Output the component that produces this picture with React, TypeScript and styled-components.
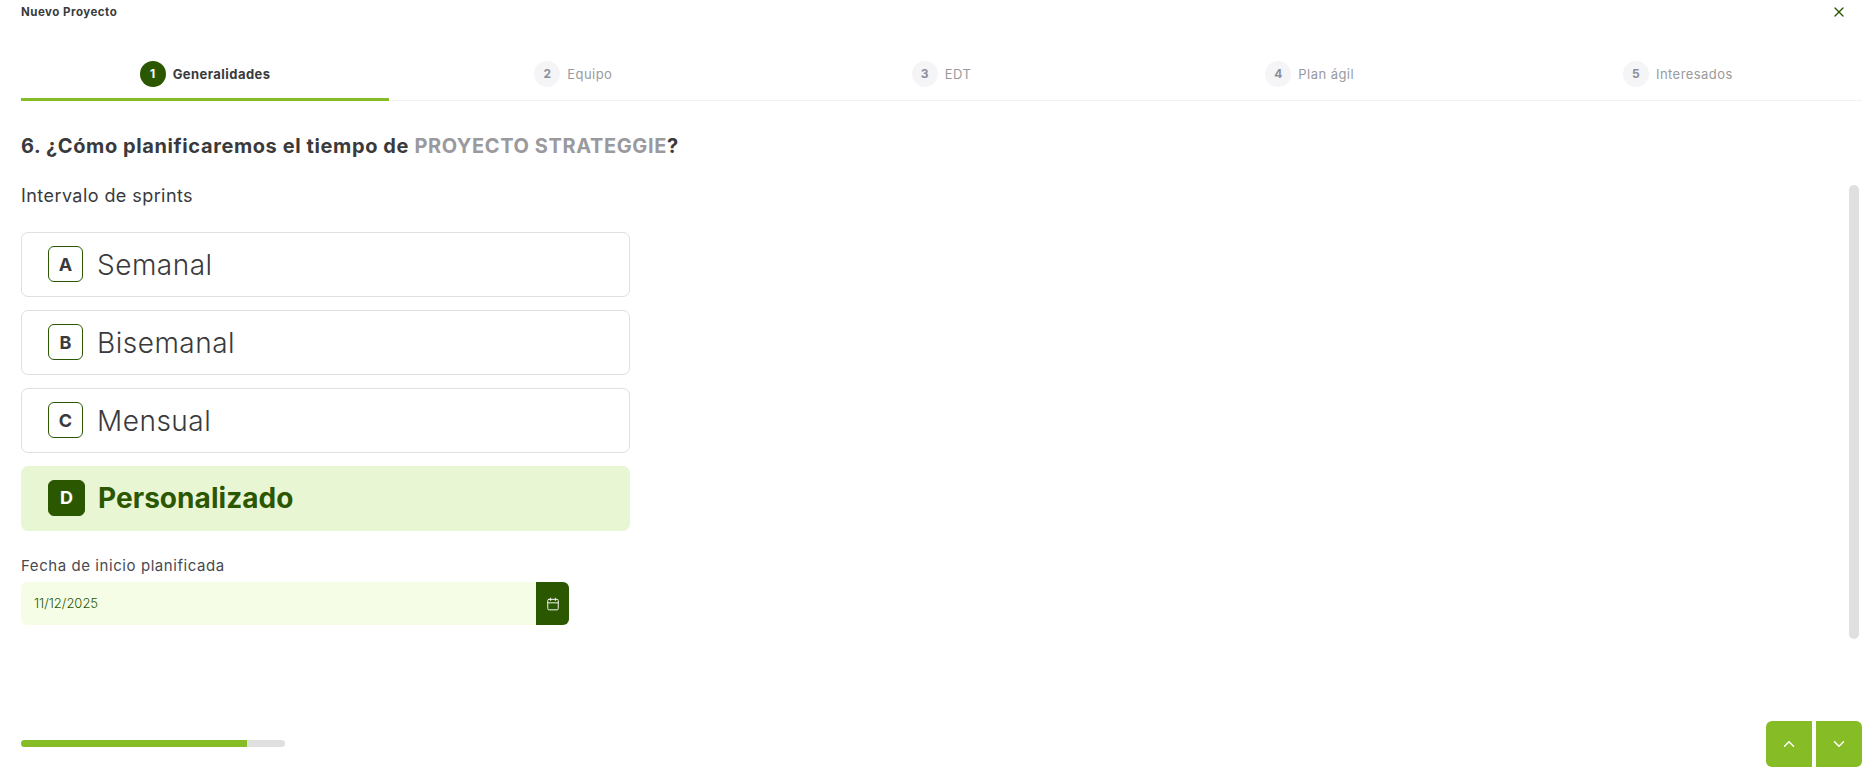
import * as React from 'react';
import styled, { createGlobalStyle } from 'styled-components';
import { X, ChevronUp, ChevronDown, Calendar } from 'lucide-react';

const GlobalStyle = createGlobalStyle`
    html, body {
        margin: 0;
        padding: 0;
        background: #fff;
    }
    * {
        box-sizing: border-box;
    }
    body {
        font-family: "Inter", "Noto Sans", sans-serif;
        color: #3a3a3c;
    }
`;

const Page = styled.div`
    width: 1873px;
    height: 773px;
    padding: 0 11px 6px 21px;
    display: flex;
    flex-direction: column;
    overflow: hidden;
`;

const Header = styled.div`
    height: 23px;
    display: flex;
    align-items: center;
    justify-content: space-between;
`;

const Title = styled.div`
    font-size: 11.5px;
    font-weight: 700;
    letter-spacing: 0.5px;
    color: #3a3a3c;
`;

const CloseButton = styled.button`
    width: 16px;
    height: 16px;
    margin-right: 15px;
    padding: 0;
    border: 0;
    background: none;
    color: #2b5700;
    display: flex;
    align-items: center;
    justify-content: center;
`;

const Tabs = styled.div`
    margin-top: 27px;
    display: grid;
    grid-template-columns: repeat(5, 1fr);
    border-bottom: 1px solid #f0f2f5;
`;

const Tab = styled.div<{ $active?: boolean }>`
    height: 51px;
    padding-top: 11px;
    margin-bottom: -1px;
    display: flex;
    justify-content: center;
    gap: 7px;
    border-bottom: 3px solid ${({ $active }) => ($active ? '#86bc25' : 'transparent')};
    font-size: 13px;
    letter-spacing: 0.45px;
    font-weight: ${({ $active }) => ($active ? 700 : 400)};
    color: ${({ $active }) => ($active ? '#3a3a3c' : '#9a9a9e')};
    line-height: 26px;
`;

const TabNumber = styled.span<{ $active?: boolean }>`
    width: 26px;
    height: 26px;
    border-radius: 50%;
    display: flex;
    align-items: center;
    justify-content: center;
    font-size: 12px;
    font-weight: 700;
    letter-spacing: 0;
    background: ${({ $active }) => ($active ? '#2b5700' : '#f5f5f7')};
    color: ${({ $active }) => ($active ? '#fff' : '#8a8f9c')};
`;

const Body = styled.div`
    flex: 1;
    display: flex;
    justify-content: space-between;
`;

const Content = styled.div`
    width: 630px;
`;

const Question = styled.h2`
    margin: 32px 0 0;
    font-size: 20px;
    line-height: 26px;
    font-weight: 700;
    letter-spacing: 0.6px;
    white-space: nowrap;
    color: #3a3a3c;
`;

const ProjectName = styled.span`
    color: #9a999e;
`;

const SectionLabel = styled.div`
    margin-top: 25px;
    font-size: 18px;
    line-height: 24px;
    font-weight: 400;
    letter-spacing: 0.43px;
`;

const Options = styled.div`
    margin-top: 24px;
    width: 609px;
    display: flex;
    flex-direction: column;
    gap: 13px;
`;

const Option = styled.div<{ $selected?: boolean }>`
    height: 65px;
    padding-left: 26px;
    padding-bottom: ${({ $selected }) => ($selected ? 2 : 0)}px;
    display: flex;
    align-items: center;
    gap: ${({ $selected }) => ($selected ? 13 : 14)}px;
    border-radius: 7px;
    border: 1px solid ${({ $selected }) => ($selected ? '#e8f6d4' : '#dfdfe1')};
    background: ${({ $selected }) => ($selected ? '#e8f6d4' : '#fff')};
    color: ${({ $selected }) => ($selected ? '#2b5700' : '#3a3a3c')};
    font-size: 28px;
    letter-spacing: ${({ $selected }) => ($selected ? 0.05 : 0.5)}px;
    font-weight: ${({ $selected }) => ($selected ? 700 : 300)};
`;

const OptionKey = styled.span<{ $selected?: boolean }>`
    width: ${({ $selected }) => ($selected ? 37 : 35)}px;
    height: 36px;
    margin-bottom: ${({ $selected }) => ($selected ? 0 : 1)}px;
    border-radius: 6px;
    border: 1px solid #2b5700;
    display: flex;
    align-items: center;
    justify-content: center;
    font-size: 18px;
    font-weight: 700;
    letter-spacing: 0;
    background: ${({ $selected }) => ($selected ? '#2b5700' : '#fff')};
    color: ${({ $selected }) => ($selected ? '#fff' : '#3a3a3c')};
`;

const FieldLabel = styled.div`
    margin-top: 25px;
    font-size: 15px;
    line-height: 20px;
    letter-spacing: 0.57px;
    color: #4a4a4e;
`;

const DateField = styled.div`
    margin-top: 6px;
    width: 548px;
    height: 43px;
    display: flex;
    border-radius: 6px;
    overflow: hidden;
    background: #f5fde6;
`;

const DateValue = styled.div`
    flex: 1;
    padding: 0 0 2px 13px;
    display: flex;
    align-items: center;
    font-size: 13px;
    font-weight: 300;
    letter-spacing: 0;
    color: #2b5700;
`;

const DateButton = styled.div`
    width: 33px;
    display: flex;
    align-items: center;
    justify-content: center;
    background: #2b5700;
    color: #fff;
`;

const ScrollThumb = styled.div`
    width: 10px;
    height: 454px;
    margin: 84px 3px 0 0;
    border-radius: 5px;
    background: #e0e0e0;
`;

const Footer = styled.div`
    display: flex;
    align-items: center;
    justify-content: space-between;
`;

const Progress = styled.div`
    width: 264px;
    height: 7px;
    margin-bottom: 2px;
    border-radius: 4px;
    overflow: hidden;
    background: #e0e0e0;
`;

const ProgressFill = styled.div`
    height: 100%;
    background: #86bc25;
`;

const NavButtons = styled.div`
    display: flex;
    gap: 4px;
`;

const NavButton = styled.button<{ $side: 'left' | 'right' }>`
    width: 46px;
    height: 46px;
    padding: 0;
    border: 0;
    display: flex;
    align-items: center;
    justify-content: center;
    background: #86bc25;
    color: #fff;
    border-radius: ${({ $side }) => ($side === 'left' ? '6px 0 0 6px' : '0 6px 6px 0')};
`;

const steps = ['Generalidades', 'Equipo', 'EDT', 'Plan ágil', 'Interesados'];

const options = [
    { key: 'A', label: 'Semanal' },
    { key: 'B', label: 'Bisemanal' },
    { key: 'C', label: 'Mensual' },
    { key: 'D', label: 'Personalizado', selected: true },
];

const App: React.FC = () => {
    return (
        <Page>
            <GlobalStyle />
            <Header>
                <Title>Nuevo Proyecto</Title>
                <CloseButton><X size={18} strokeWidth={2} /></CloseButton>
            </Header>
            <Tabs>
                {steps.map((step, i) => (
                    <Tab key={step} $active={i === 0}>
                        <TabNumber $active={i === 0}>{i + 1}</TabNumber>
                        {step}
                    </Tab>
                ))}
            </Tabs>
            <Body>
                <Content>
                    <Question>6. ¿Cómo planificaremos el tiempo de <ProjectName>PROYECTO STRATEGGIE</ProjectName>?</Question>
                    <SectionLabel>Intervalo de sprints</SectionLabel>
                    <Options>
                        {options.map(o => (
                            <Option key={o.key} $selected={o.selected}>
                                <OptionKey $selected={o.selected}>{o.key}</OptionKey>
                                {o.label}
                            </Option>
                        ))}
                    </Options>
                    <FieldLabel>Fecha de inicio planificada</FieldLabel>
                    <DateField>
                        <DateValue>11/12/2025</DateValue>
                        <DateButton><Calendar size={14} strokeWidth={1.6} /></DateButton>
                    </DateField>
                </Content>
                <ScrollThumb />
            </Body>
            <Footer>
                <Progress><ProgressFill style={{ width: '85.7%' }} /></Progress>
                <NavButtons>
                    <NavButton $side="left"><ChevronUp size={18} strokeWidth={2} /></NavButton>
                    <NavButton $side="right"><ChevronDown size={18} strokeWidth={2} /></NavButton>
                </NavButtons>
            </Footer>
        </Page>
    );
};

export default App;
